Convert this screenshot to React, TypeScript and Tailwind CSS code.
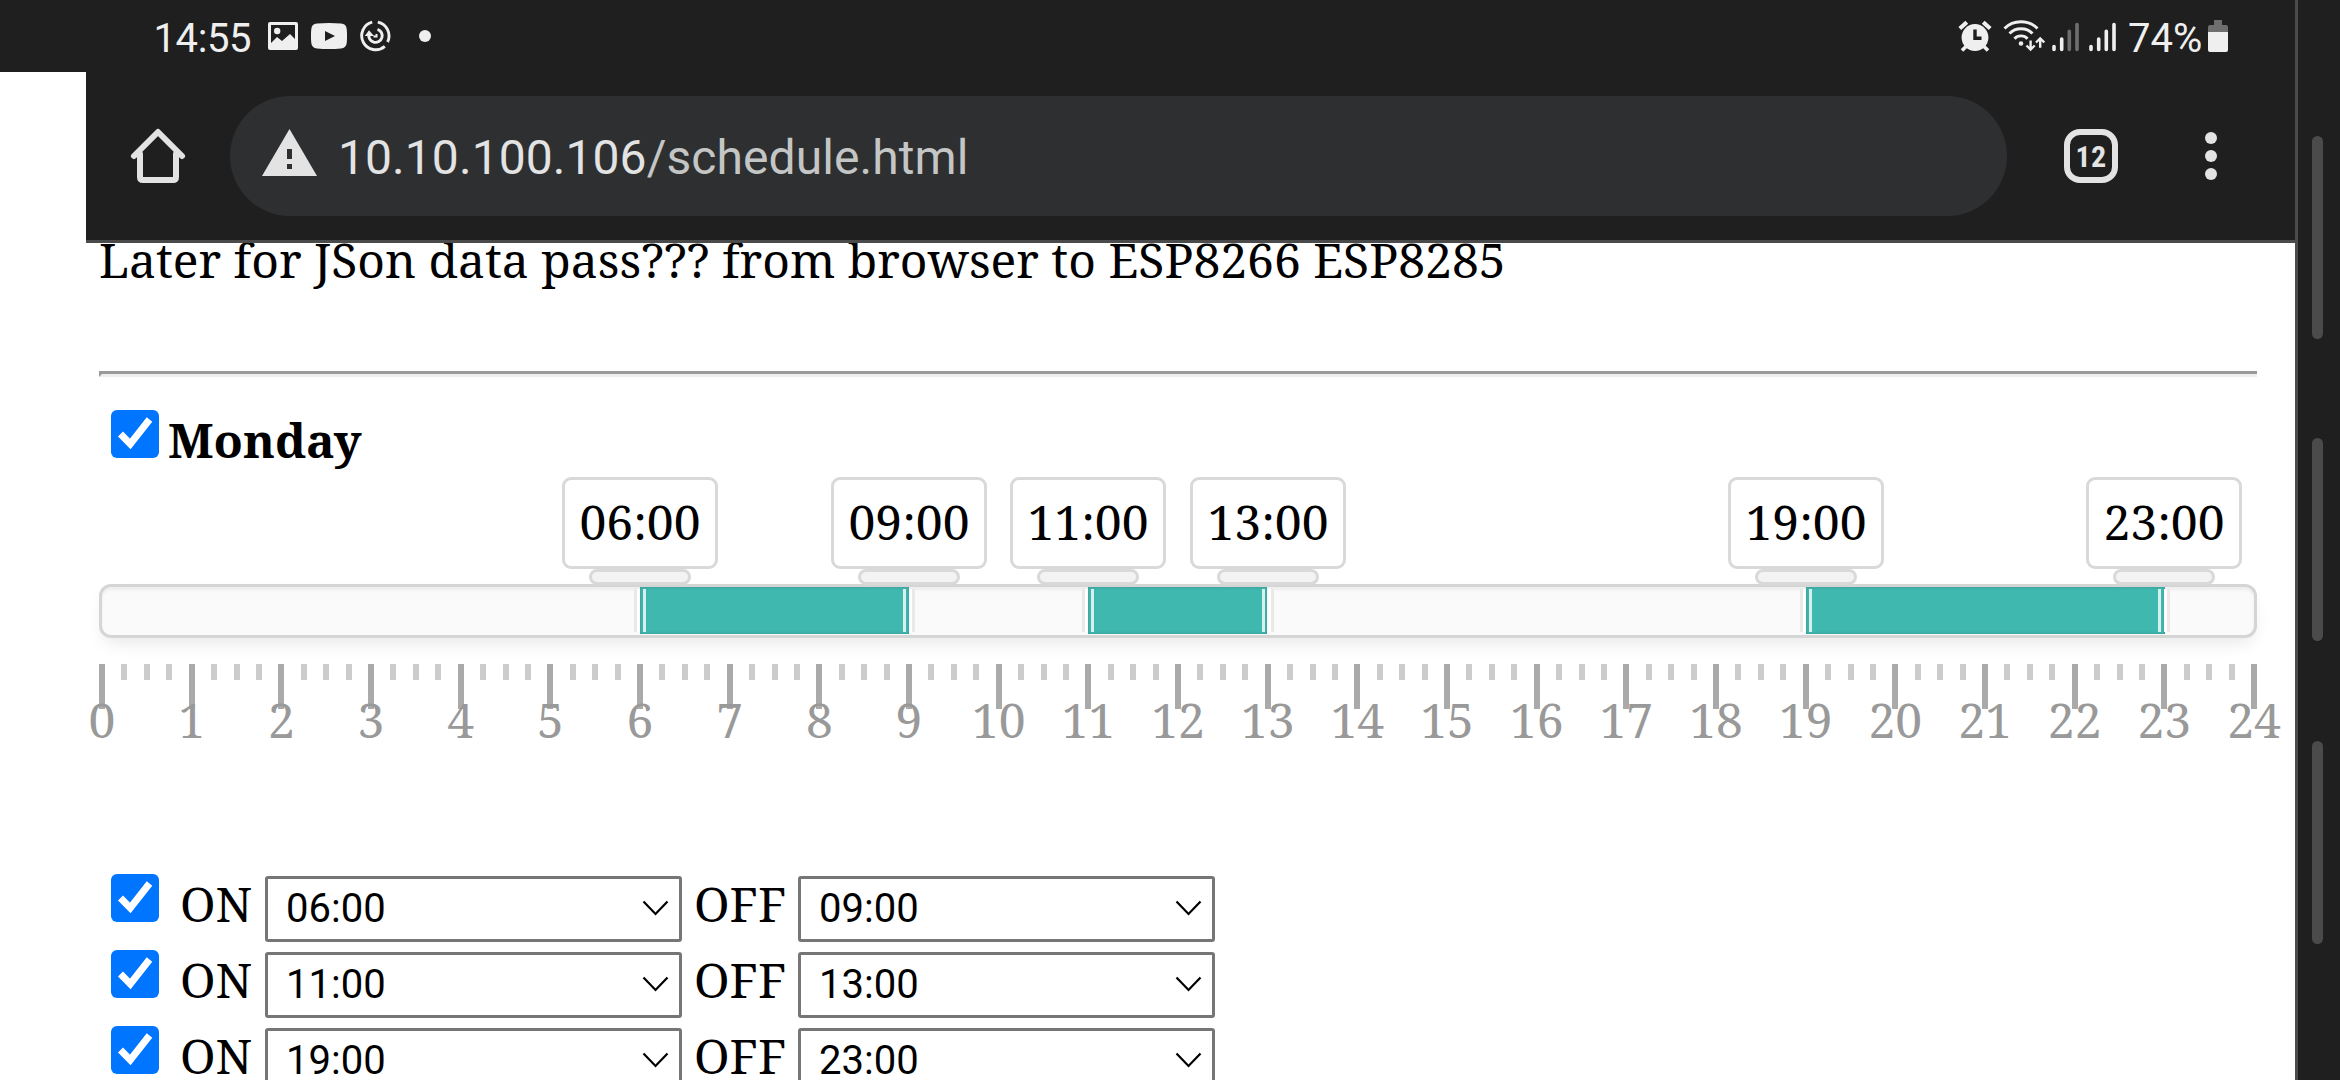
const HOUR = 2152 / 24;

const ranges = [
  { on: 6, off: 9 },
  { on: 11, off: 13 },
  { on: 19, off: 23 },
];

const format = (hour: number) => `${String(hour).padStart(2, "0")}:00`;

function StatusBar() {
  return (
    <div className="flex h-[72px] shrink-0 items-start bg-[#1f1f1f] pl-[153.5px] text-[40px] leading-[47px] text-[#efefef]">
      <span className="mt-[14.5px] w-[114.5px] tracking-[-0.4px]">14:55</span>
      <svg className="mt-[22px] h-7 w-[30px]" viewBox="0 0 30 28">
        <path fillRule="evenodd" fill="#efefef" d="M2 0H28Q30 0 30 2V26Q30 28 28 28H2Q0 28 0 26V2Q0 0 2 0ZM3 3V21L9 15L14 19L22 12L27 17V3Z" />
        <circle cx="9.2" cy="9" r="3.2" fill="#efefef" />
      </svg>
      <svg className="mt-[23px] ml-[13px] h-[26px] w-9" viewBox="0 0 36 26">
        <path fill="#efefef" d="M6 .6Q18-.4 30 .6Q35.300 1 35.700 6Q36.400 13 35.700 20Q35.300 25 30 25.400Q18 26.400 6 25.400Q.7 25 .3 20Q-.4 13 .3 6Q.7 1 6 .6Z" />
        <path fill="#1f1f1f" d="M14 8V18L24 13Z" />
      </svg>
      <svg className="mt-5 ml-3 h-8 w-8" viewBox="0 0 32 32" fill="none" stroke="#efefef" strokeWidth="2.900">
        <path d="M13.200 2.200A14 14 0 1 0 25.800 26.400" />
        <path d="M18.800 2.200A14 14 0 0 1 28.600 22" />
        <path d="M18.500 9.300A6.700 6.700 0 1 1 10 14" strokeWidth="2.900" />
        <path d="M14.500 16.500H17.500V14" strokeWidth="2" />
        <path d="M10 10.300L15 16H5.800Z" fill="#efefef" stroke="none" />
      </svg>
      <span className="mt-[30px] ml-[28px] size-3 rounded-full bg-[#efefef]" />

      <svg className="mt-5 ml-auto h-8 w-[34px]" viewBox="0 0 34 32">
        <g stroke="#efefef" fill="none">
          <path d="M1.800 8.500L8.800 2.200M32.200 8.500L25.200 2.200" strokeWidth="4.200" />
          <path d="M9 25.500L4 30.500M25 25.500L30 30.500" strokeWidth="3.600" />
        </g>
        <circle cx="17" cy="17.500" r="13.400" fill="#efefef" />
        <path d="M17 9.500V18.300H23.500" fill="none" stroke="#1f1f1f" strokeWidth="3.400" />
      </svg>
      <svg className="mt-5 ml-[11px] h-8 w-[42px]" viewBox="0 0 42 32" fill="none" stroke="#efefef">
        <path d="M1.500 8.500Q8 1.700 18 1.700T34.500 8.500" strokeWidth="2.900" />
        <path d="M6.500 13.500Q11 8.800 18 8.800T29.500 13.500" strokeWidth="2.900" />
        <path d="M11.500 18.700Q14 15.900 18 15.900T24.500 18.700" strokeWidth="2.900" />
        <circle cx="18" cy="23.500" r="2.300" fill="#efefef" stroke="none" />
        <path d="M27.600 20.500V29M23.500 25.500L27.600 29.500L31.700 25.500" strokeWidth="2.400" />
        <path d="M37.200 27.800V19M33 22.500L37.200 18.500L41.300 22.500" strokeWidth="2.400" />
      </svg>
      <Signal dim />
      <Signal />
      <span className="mt-[14.5px] ml-[12px] w-[80px]">74%</span>
      <svg className="mt-5 mr-[67px] h-8 w-5" viewBox="0 0 20 32">
        <path d="M6 0H14V5H18Q20 5 20 7V12H0V7Q0 5 2 5H6Z" fill="#6e6e6e" />
        <path d="M0 12H20V30Q20 32 18 32H2Q0 32 0 30Z" fill="#efefef" />
      </svg>
    </div>
  );
}

function Signal({ dim = false }: { dim?: boolean }) {
  const faded = dim ? "#6e6e6e" : "#efefef";
  return (
    <svg
      className={dim ? "mt-[22px] ml-[7px] h-[30px] w-[27px]" : "mt-[22px] ml-[10px] h-[30px] w-[27px]"}
      viewBox="0 0 27 30"
      strokeWidth="3.600"
      strokeLinecap="round"
    >
      <path d="M2 24.500V27.500M9.700 17V27.500" stroke="#efefef" />
      <path d="M17.300 9.300V27.500M25 2.500V27.500" stroke={faded} />
    </svg>
  );
}

function Toolbar() {
  return (
    <div className="flex h-[171px] shrink-0 items-start border-b-3 border-[#4b4b4b] bg-[#1f1f1f] pl-[43px]">
      <svg className="mt-[55px] h-[58px] w-[58px]" viewBox="0 0 58 58" fill="none" stroke="#e3e3e3" strokeWidth="6" strokeLinecap="round">
        <path d="M5 29L29 5L53 29" strokeLinejoin="round" />
        <path d="M11 27V50Q11 53 14 53H44Q47 53 47 50V27" />
      </svg>
      <div className="mt-6 ml-[43px] flex h-[120px] w-[1777px] items-start rounded-full bg-[#2e2f31] pl-8">
        <svg className="mt-[33px] h-[47px] w-[55px]" viewBox="0 0 55 47">
          <path fill="#e3e3e3" d="M27.500 0L55 47H0Z" />
          <path fill="#2e2f31" d="M25 20H30V30H25ZM25 35H30V40H25Z" />
        </svg>
        <span className="ml-[21px] text-[48px] leading-[124px] tracking-[0.07px] text-[#e3e3e3]">
          10.10.100.106<span className="text-[#c4c5c5]">/schedule.html</span>
        </span>
      </div>
      <div className="mt-[57px] ml-[57px] flex size-[54px] justify-center rounded-[16px] border-6 border-[#e3e3e3] font-['Roboto_Condensed'] text-[30px] leading-[43px] font-bold tracking-[0.3px] text-[#e3e3e3]">
        12
      </div>
      <div className="mt-[60px] ml-[87px] flex flex-col gap-[6px]">
        <span className="size-3 rounded-full bg-[#e3e3e3]" />
        <span className="size-3 rounded-full bg-[#e3e3e3]" />
        <span className="size-3 rounded-full bg-[#e3e3e3]" />
      </div>
    </div>
  );
}

function Checkbox() {
  return (
    <svg className="size-12 shrink-0 rounded-[6px] bg-[#0075ff]" viewBox="0 0 48 48">
      <path d="M9.500 24L19.300 34L38.500 9.500" fill="none" stroke="#fff" strokeWidth="7" />
    </svg>
  );
}

function Handle({ hour, side }: { hour: number; side: "left" | "right" }) {
  return (
    <div
      className="absolute top-0 flex w-[156px] -translate-x-1/2 flex-col items-center"
      style={{ left: 3 + Math.round(hour * HOUR) }}
    >
      <div className="h-[92px] w-full rounded-[9px] border-3 border-[#d9d9d9] bg-white text-center leading-[84px]">
        {format(hour)}
      </div>
      <div className="h-4 w-[102px] rounded-[8px] border-3 border-[#d9d9d9] bg-[#f3f3f3]" />
      <div
        className={
          side === "left"
            ? "mt-1 flex h-[43px] w-3 border-x-3 border-l-[#e9e9e9] border-r-[#d8f0ed]"
            : "mt-1 flex h-[43px] w-3 border-x-3 border-l-[#d8f0ed] border-r-[#e9e9e9]"
        }
      >
        <span className={side === "left" ? "w-[3px] bg-white" : "ml-[3px] w-[3px] bg-white"} />
      </div>
    </div>
  );
}

function Slider() {
  return (
    <div className="relative mt-[7px] h-40 w-[2158px]">
      <div className="absolute top-[107px] h-[54px] w-full rounded-[12px] border-3 border-[#d5d5d5] bg-[#fafafa] shadow-[0_9px_18px_-5px_rgba(0,0,0,0.1),inset_0_3px_3px_rgba(0,0,0,0.05)]" />
      {ranges.map(({ on, off }) => (
        <div
          key={on}
          className="absolute top-[110px] h-[47px] bg-[#3fb8af] shadow-[inset_0_0_3px_rgba(51,51,51,0.3)]"
          style={{ left: 3 + Math.round(on * HOUR), width: Math.round((off - on) * HOUR) }}
        />
      ))}
      {ranges.map(({ on, off }) => (
        <div key={on}>
          <Handle hour={on} side="left" />
          <Handle hour={off} side="right" />
        </div>
      ))}
    </div>
  );
}

function Scale() {
  return (
    <div className="relative mt-[27px] h-[100px] w-[2158px] text-[#999]">
      {Array.from({ length: 97 }, (_, i) => (
        <span
          key={i}
          className={i % 4 === 0 ? "absolute top-0 h-[45px] w-[6px] bg-[#aaa]" : "absolute top-0 h-4 w-[6px] bg-[#ccc]"}
          style={{ left: Math.round((i * HOUR) / 4) }}
        />
      ))}
      {Array.from({ length: 25 }, (_, hour) => (
        <span
          key={hour}
          className="absolute top-[35px] -translate-x-1/2 leading-[42px]"
          style={{ left: 3 + hour * HOUR }}
        >
          {hour}
        </span>
      ))}
    </div>
  );
}

function Select({ value }: { value: string }) {
  return (
    <div className="mt-[2px] flex h-[66px] w-[417px] shrink-0 items-start justify-between rounded-[3px] border-3 border-[#767676] bg-white pr-[10px] pl-[18px] font-[Roboto] text-[40px] leading-[59px]">
      {value}
      <svg className="mt-[21px] h-4 w-[27px]" viewBox="0 0 27 16" fill="none" stroke="#000" strokeWidth="2.200">
        <path d="M1.500 1.500L13.500 14L25.500 1.500" />
      </svg>
    </div>
  );
}

function ScheduleRow({ on, off }: { on: number; off: number }) {
  return (
    <div className="flex h-[76px] items-start pl-3 leading-[59px]">
      <Checkbox />
      <span className="ml-[21px] w-[85px]">ON</span>
      <Select value={format(on)} />
      <span className="ml-3 w-[104px]">OFF</span>
      <Select value={format(off)} />
    </div>
  );
}

export default function App() {
  return (
    <div className="flex h-[1080px] w-[2340px] overflow-hidden bg-white font-[Roboto]">
      <div className="flex w-[2295px] flex-col">
        <StatusBar />
        <div className="ml-[86px] flex min-h-0 flex-1 flex-col">
          <Toolbar />
          <main className="min-h-0 flex-1 overflow-hidden pl-[13px] font-['Noto_Serif',serif] text-[48px] whitespace-nowrap text-black">
            <p className="-mt-[13px] leading-[60px]">
              Later for JSon data pass??? from browser to ESP8266 ESP8285
            </p>
            <div className="mt-[81px] h-[6px] w-[2158px] border-t-3 border-b-3 border-l-3 border-t-[#999a9a] border-b-[#eee] border-l-[#999a9a]" />
            <div className="mt-[33px] flex h-[60px] items-start pl-3 leading-[59px] font-bold">
              <Checkbox />
              <span className="ml-[9px] tracking-[-0.1px]">Monday</span>
            </div>
            <Slider />
            <Scale />
            <div className="mt-[110px]">
              {ranges.map(({ on, off }) => (
                <ScheduleRow key={on} on={on} off={off} />
              ))}
            </div>
          </main>
        </div>
      </div>
      <div className="flex flex-1 flex-col border-l-3 border-[#4b4b4b] bg-[#1f1f1f] pt-[136px] pl-[14px]">
        <span className="h-[203px] w-[11px] rounded-full bg-[#4b4b4b]" />
        <span className="mt-[99px] h-[203px] w-[11px] rounded-full bg-[#4b4b4b]" />
        <span className="mt-[100px] h-[203px] w-[11px] rounded-full bg-[#4b4b4b]" />
      </div>
    </div>
  );
}
